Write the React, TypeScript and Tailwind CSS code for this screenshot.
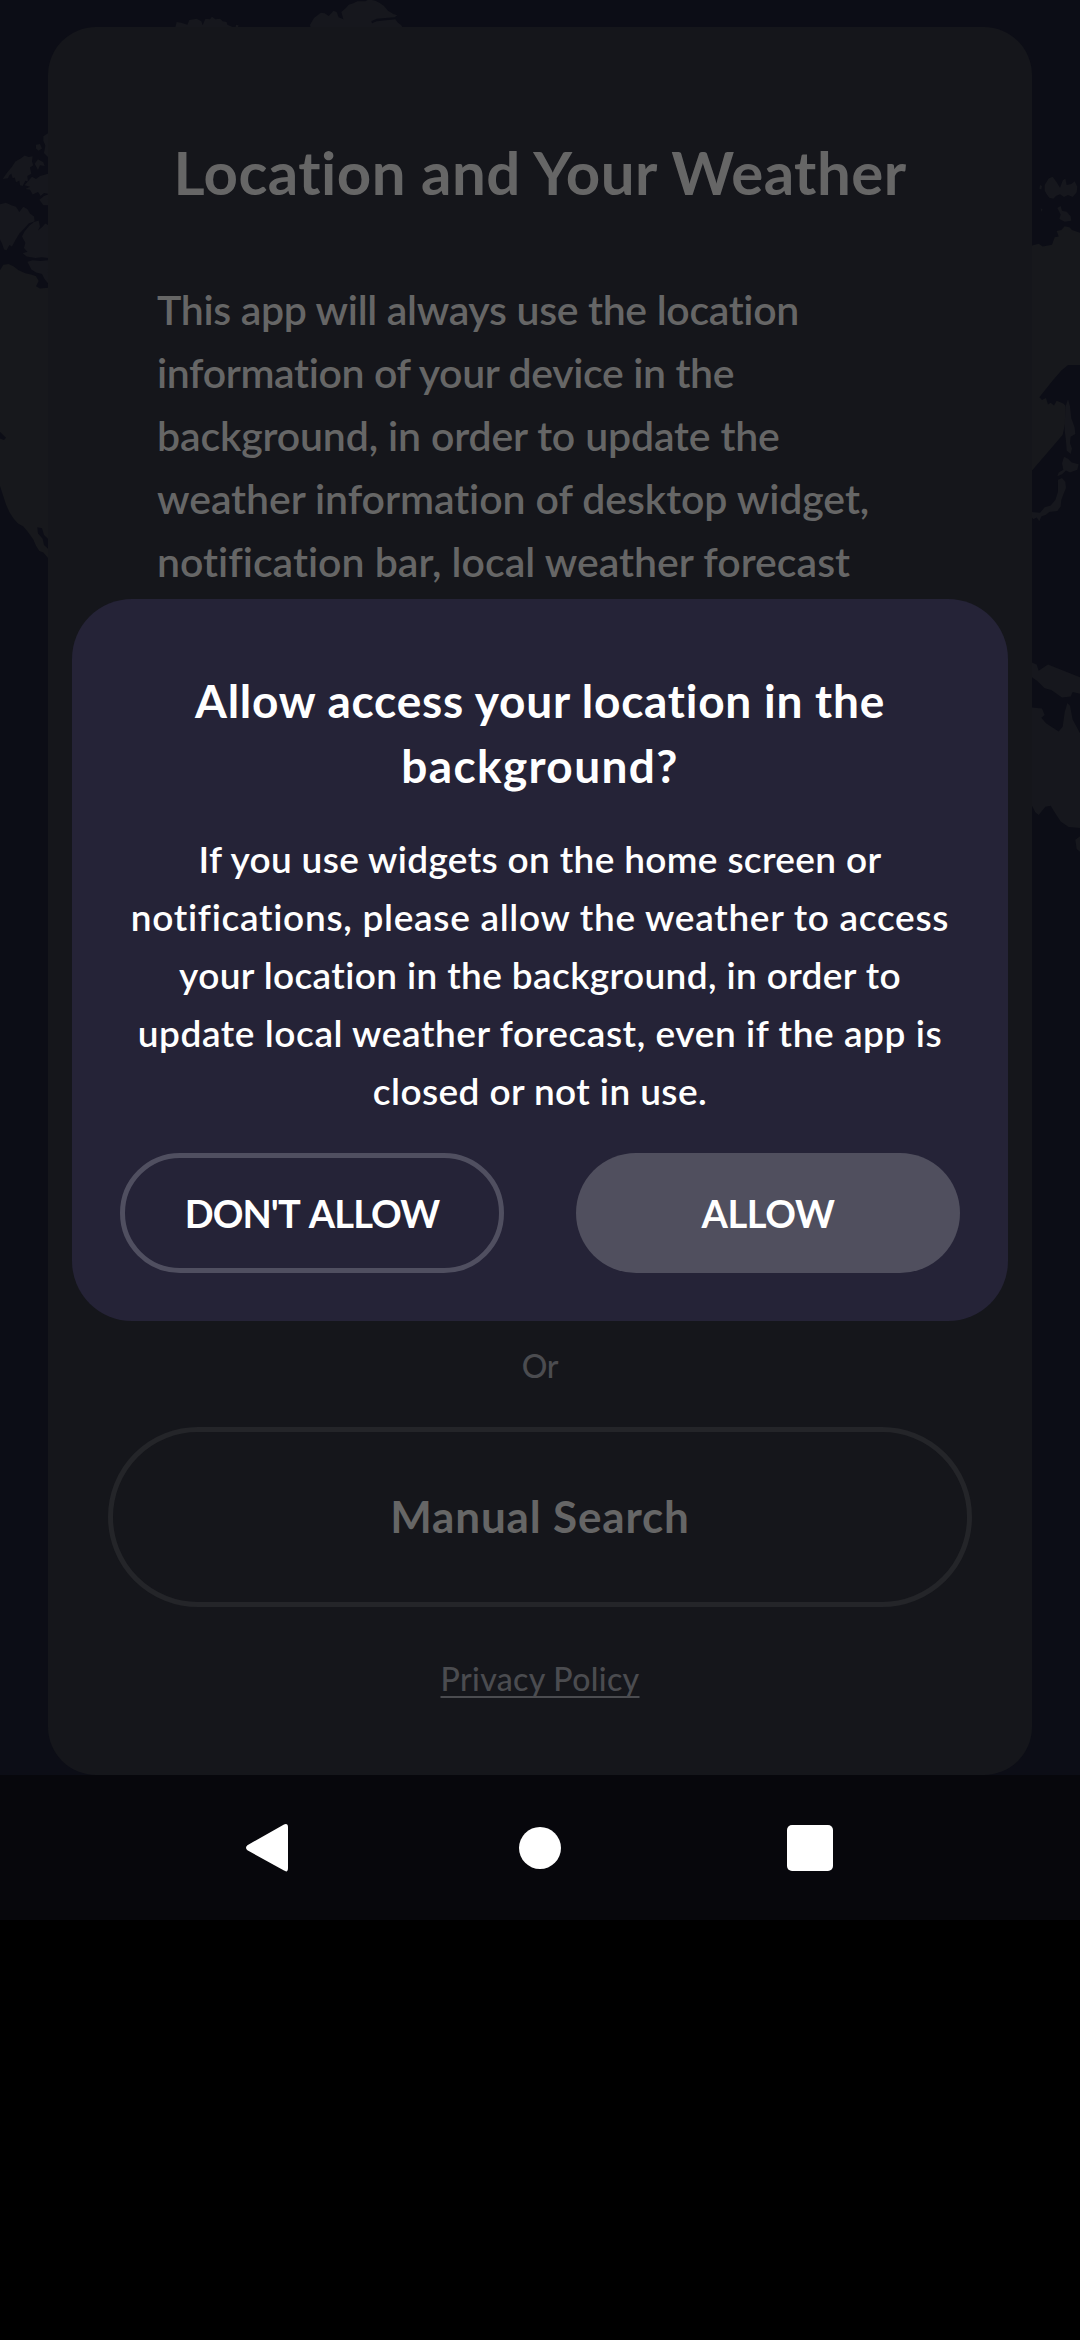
import React from 'react';

function WorldMap() {
  return (
    <svg className="absolute inset-0" width="1080" height="1775" viewBox="0 0 1080 1775" fill="#16171d" aria-hidden="true">
      <g transform="translate(160 0) scale(0.33333)">
        <path d="M46 82l4-16 14 2 18 6 6-14 22-4 14 8 4 12 8-20 14 2 6-8 10 8 14-2 8 8 12 2 2 8 14 6 8 12z" />
        <path d="M450 74l12-20 8-6 12-10 12 2 12 8 8-8 6-8 10 4 6 16 14 6-6-22 14-12 8-10 14-4 12-6h24l10-6 20 4 12 6 14 10 12 14 16 10 12 4-8 6-54 4-16 8 2 6 14-6 56-6 8 10 10 8 6 12 2 8H500l-8-8-40-2z" />
        <path d="M228 74l8 2-4 10h-6z" />
      </g>
      <g transform="scale(0.33333 0.3827)">
        <path d="M22 450l14-14 10-14 16-8 12-8 12 4 12-2-2 14 4 10-10 6 4 16-12 6 2 14-8-2-8 14-8-2-2-12-10 4-4-12-6 2-4-12-6 4-4 8-16 2z" />
        <path d="M88 470l8-8 12 6 12-8 24-6v52l-12-2-10 8-8-10-16 6-8-12-14-2 14-6-16-4zM108 378l12-2 6 12-10 6-8-6zM130 356l14-8v62l-12-10 4-20-6-12z" />
        <path d="M104 428l10-12 16 8 4 10-14-2-6 12zM118 522l14-10 12-4v28h-14z" />
        <path d="M0 534l18-4 16 6 14 4 10 14 12-14 12 6 8 12 12 8 2 12-18 6-14 14-14 12-12 18-10 16-8-4-8 14-8-2-6-16-6-10z" />
        <path d="M66 618l8-14 14-14 14-10 14-4 4 16-6 10 12-8 10-10 8 4v86l-18-2-20 2-26-4-12-8 14-4-10-10 4-14z" />
        <path d="M82 684l16-4 24 2 22-2v60l-10-10-8-14-18-4-14-8z" />
        <path fill="#17181c" d="M0 706l10-14 16-2 14 6 16 10 20 8 20 4 12 4 8 12-8 14 12 6 24-2v706l-14-14-12-4-10-14-8-16-16-20-14-14-16-8-14-14-12-16-10-20L0 1270z" />
        <path fill="#0c0d16" d="M112 1378l14 2 6 18 12 10v26l-12-10-4-16-14-14zM0 1128l18 16-6 6-12-4z" />
      </g>
      <g transform="translate(1020 140) scale(0.33333 0.4592)">
        <path d="M74 98l12-14 12-4 12 12 10 12 8-16 8-4 4 14 14-2 10-6 8 12-2 12-12 10-14-4-12 4-12-6-12 4-8 6-12-2-8-8-6-8zM60 98l6 2-2 8-6-2zM112 148l10-4 4 10 14 2 12 10 2 10-20 2-16-6 4-10zM62 148l6 4-4 4z" />
        <path fill="#17181c" d="M36 230l20-4 12 6 28-4 8-16 12-2-6-12 14-2 10-8 14 2 8 6 24 6v288h-36l-20 12-26 22-40 36 8 6 12-4 6 14 8-4 10 6 8-10 20 6 6 4v38l-8 26-12 10-80 68z" />
        <path d="M136 582l8-18 6 16 4 26 10 20 2 14-14 6-2 14 6 12-4 12-12-8-2-20-4-24zM132 690l12 4 10 8 22 4-4 12-22 6-12-4-12 8-14 4 4-8 14-6-4-14z" />
        <path d="M114 740l12-4 10 8 2 14-8 14-6 12-2 14-10 10-24 2-10 6-14 4-6 10-8-8-10 4-4-4v-12l24 2 14-12 18-4 14-12 8-18z" />
        <path d="M36 1138l14 4 6 14 28-14 96 28v36l-22-4-6 10-26 2-32-16-20-4-22-16-16-8z" />
        <path d="M36 1236l30 2 8 14-10 6 14 12 38 18 12-10 6-32 8-20 8 6 8 30 22 30v206l-34-2-24-12-20-22-10-12-16 2-20 18-10-6-10-14z" />
        <path d="M166 1524l14-8v34l-10-6z" />
      </g>
    </svg>
  );
}

function NavigationBar() {
  return (
    <nav className="relative flex h-[145px] items-center justify-between bg-[#07070c] px-[240px]">
      <button aria-label="Back" className="flex size-[60px] items-center justify-center">
        <svg width="60" height="60" viewBox="0 0 60 60" fill="#fff">
          <path d="M7.4 27.2L44 6.4Q48 5 48 9V50Q48 55 44 52.6L7.4 32.2Q4.6 29.7 7.4 27.2Z" />
        </svg>
      </button>
      <button aria-label="Home" className="flex size-[60px] items-center justify-center">
        <span className="size-[42px] rounded-full bg-white" />
      </button>
      <button aria-label="Recents" className="flex size-[60px] items-center justify-center">
        <span className="size-[46px] rounded-[5px] bg-white" />
      </button>
    </nav>
  );
}

function LocationCard() {
  return (
    <main className="relative mx-12 mt-[27px] flex h-[1748px] flex-col rounded-[48px] bg-[#15161b] px-[60px] pt-[109px] pb-[77px] text-[#666]">
      <h1 className="text-center text-[60px] leading-[72px] font-bold tracking-[0.45px]">Location and Your Weather</h1>
      <p className="mt-[70px] ml-[49px] text-[41px] leading-[63px] font-semibold whitespace-nowrap">
        <span className="block tracking-[-0.33px]">This app will always use the location</span>
        <span className="block tracking-[-0.37px]">information of your device in the</span>
        <span className="block tracking-[-0.16px]">background, in order to update the</span>
        <span className="block tracking-[-0.07px]">weather information of desktop widget,</span>
        <span className="block tracking-[0.01px]">notification bar, local weather forecast</span>
      </p>
      <div className="mt-auto flex flex-col items-center">
        <span className="text-[32px] leading-[38px] font-medium tracking-[-0.4px] text-[#4b4c50]">Or</span>
        <button className="mt-[42px] h-[180px] w-full rounded-full border-[5px] border-[#242529] pb-[3px] text-[44px] leading-[52px] font-bold tracking-[0.84px]">
          Manual Search
        </button>
        <a className="mt-[53px] text-[32px] leading-[38px] font-medium tracking-[0.35px] text-[#4b4c50] underline decoration-2 underline-offset-[5px] [text-decoration-skip-ink:none]">
          Privacy Policy
        </a>
      </div>
    </main>
  );
}

function PermissionDialog() {
  return (
    <div className="absolute inset-x-0 top-[599px] flex justify-center">
      <section role="dialog" className="h-[722px] w-[936px] rounded-[60px] bg-[#252337] px-12 pt-[69px] text-center whitespace-nowrap text-white">
        <h2 className="text-[46px] leading-[65px] font-bold">
          <span className="block tracking-[0.76px]">Allow access your location in the</span>
          <span className="block tracking-[1.35px]">background?</span>
        </h2>
        <p className="mt-[32px] text-[37px] leading-[58px] font-semibold">
          <span className="block tracking-[0.34px]">If you use widgets on the home screen or</span>
          <span className="block tracking-[0.7px]">notifications, please allow the weather to access</span>
          <span className="block tracking-[0.37px]">your location in the background, in order to</span>
          <span className="block tracking-[0.57px]">update local weather forecast, even if the app is</span>
          <span className="block tracking-[0.41px]">closed or not in use.</span>
        </p>
        <div className="mt-[33px] flex justify-between text-[38px] leading-[46px] font-bold">
          <button className="h-[120px] w-[384px] rounded-full border-[5px] border-[#504f60] tracking-[-0.9px] [word-spacing:3px]">DON'T ALLOW</button>
          <button className="h-[120px] w-[384px] rounded-full bg-[#504f5e] tracking-[-0.39px]">ALLOW</button>
        </div>
      </section>
    </div>
  );
}

export default function App() {
  return (
    <div className="h-[2340px] w-[1080px] overflow-hidden bg-black font-['Lato',sans-serif]">
      <div className="relative flex h-[1920px] flex-col bg-[#0c0d16]">
        <WorldMap />
        <LocationCard />
        <NavigationBar />
        <PermissionDialog />
      </div>
    </div>
  );
}
